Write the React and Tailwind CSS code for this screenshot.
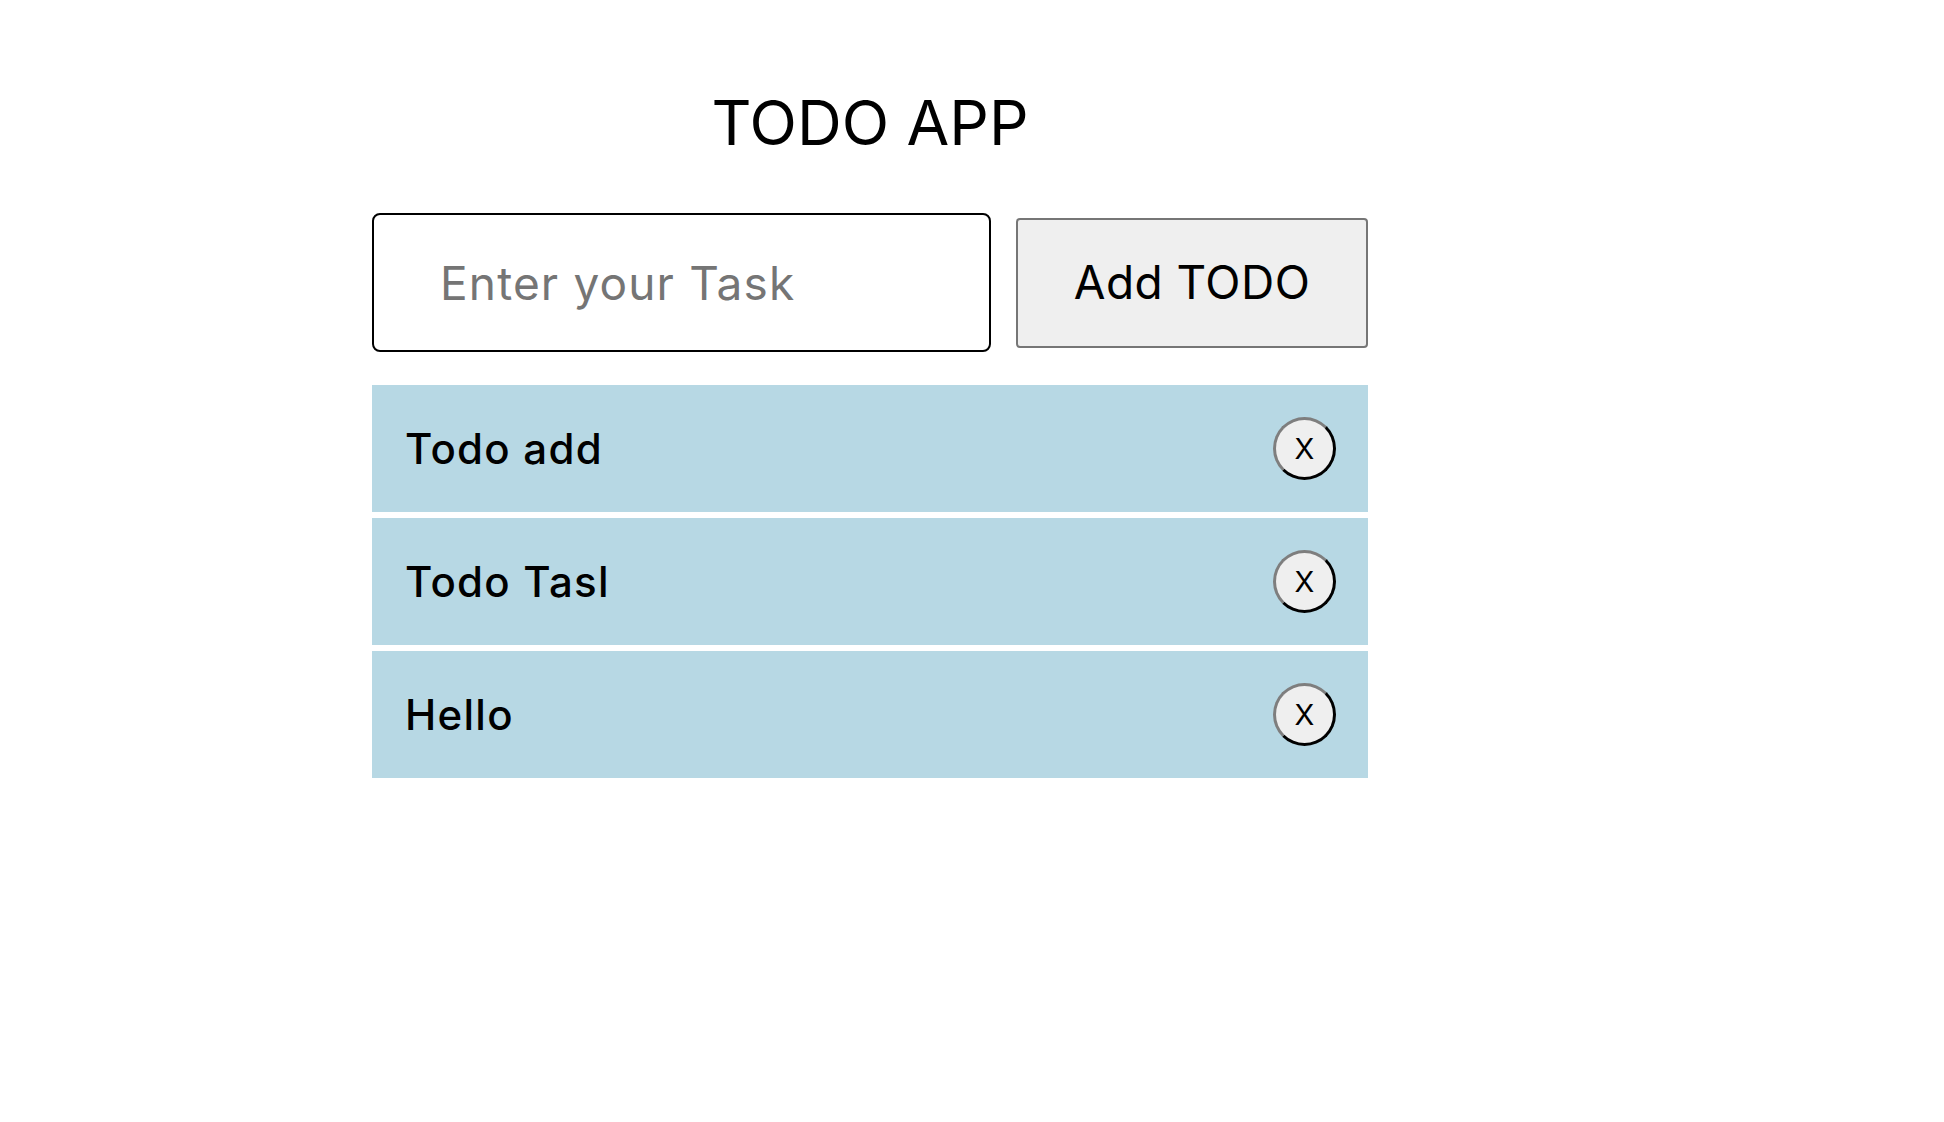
import React from "react";

const todos = ["Todo add", "Todo Tasl", "Hello"];

export default function App() {
  return (
    <div className="min-h-[1122px] w-full bg-white text-black" style={{ fontFamily: "Inter, 'Noto Sans', Arial, sans-serif" }}>
      <div className="ml-[372px] w-[996px] pt-[84px]">
        <h1 className="text-center text-[62px] leading-[78px] font-normal">TODO APP</h1>
        <div className="mt-[51px] flex items-center gap-[25px]">
          <input
            type="text"
            placeholder="Enter your Task"
            className="h-[139px] w-[619px] rounded-[8px] border-2 border-black pl-[66px] text-[46px] tracking-[0.025em] outline-none placeholder:text-[#757575]"
          />
          <button className="h-[130px] w-[352px] rounded-[4px] border-2 border-[#767676] bg-[#efefef] text-[46px] tracking-[0.01em]">
            Add TODO
          </button>
        </div>
        <ul className="mt-[33px] flex flex-col gap-[6px]">
          {todos.map((t) => (
            <li key={t} className="flex h-[127px] items-center justify-between bg-[#b7d8e4] pl-[33px] pr-[32px]">
              <span className="text-[42px] font-medium tracking-[0.03em]">{t}</span>
              <button className="flex h-[63px] w-[63px] items-center justify-center rounded-full border-[3px] border-[#2a2a2a] bg-[#efefef] text-[29px]" style={{ borderStyle: "outset" }}>
                X
              </button>
            </li>
          ))}
        </ul>
      </div>
    </div>
  );
}
